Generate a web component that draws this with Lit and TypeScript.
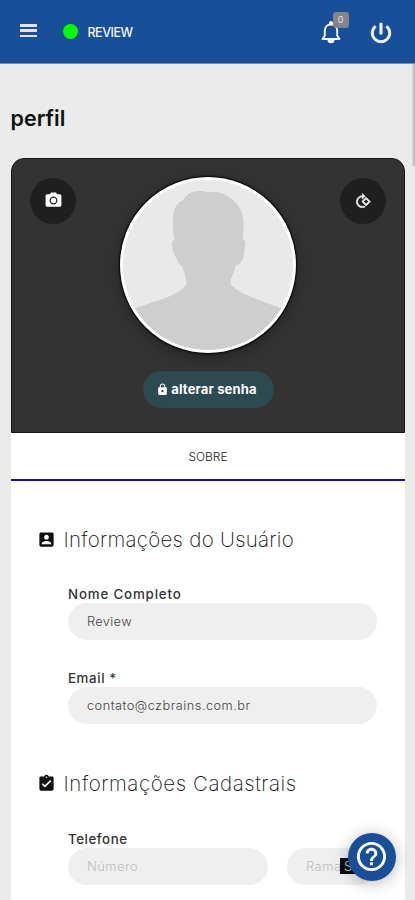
import { LitElement, html, css, svg } from "lit";
import { customElement } from "lit/decorators.js";

const ICONS: Record<string, string> = {
  power: "M13 3h-2v10h2V3zm4.83 2.17l-1.42 1.42C17.99 7.86 19 9.81 19 12c0 3.87-3.13 7-7 7s-7-3.13-7-7c0-2.19 1.01-4.14 2.58-5.42L6.17 5.17C4.23 6.82 3 9.26 3 12c0 4.97 4.03 9 9 9s9-4.03 9-9c0-2.74-1.23-5.18-3.17-6.83z",
  camera: "M9 2L7.17 4H4c-1.1 0-2 .9-2 2v12c0 1.1.9 2 2 2h16c1.1 0 2-.9 2-2V6c0-1.1-.9-2-2-2h-3.17L15 2H9zm3 15c-2.76 0-5-2.24-5-5s2.24-5 5-5 5 2.24 5 5-2.24 5-5 5zm0-1.6a3.4 3.4 0 1 0 0-6.8 3.4 3.4 0 0 0 0 6.8z",
  rotate: "M16.66 6.41L23.14 12.9l-6.49 6.48-6.49-6.48 6.5-6.49zM20.31 12.9l-3.66-3.66L13 12.9l3.66 3.66 3.65-3.66zM4.64 6.64C6.39 4.88 8.7 4 11 4V.76L15.24 5 11 9.24V6c-1.79 0-3.58.68-4.95 2.05-2.73 2.73-2.73 7.17 0 9.9C7.42 19.32 9.21 20 11 20c.97 0 1.94-.21 2.84-.61l1.49 1.49C13.98 21.62 12.49 22 11 22c-2.3 0-4.61-.88-6.36-2.64-3.52-3.51-3.52-9.21 0-12.72z",
  lock: "M18 8h-1V6c0-2.76-2.24-5-5-5S7 3.24 7 6v2H6c-1.1 0-2 .9-2 2v10c0 1.1.9 2 2 2h12c1.1 0 2-.9 2-2V10c0-1.1-.9-2-2-2zm-6 9c-1.1 0-2-.9-2-2s.9-2 2-2 2 .9 2 2-.9 2-2 2zm3.1-9H8.9V6c0-1.71 1.39-3.1 3.1-3.1s3.1 1.39 3.1 3.1v2z",
  account: "M3 5v14c0 1.1.89 2 2 2h14c1.1 0 2-.9 2-2V5c0-1.1-.9-2-2-2H5c-1.11 0-2 .9-2 2zm12 4c0 1.66-1.34 3-3 3s-3-1.34-3-3 1.34-3 3-3 3 1.34 3 3zm-9 8c0-2 4-3.1 6-3.1s6 1.1 6 3.1v1H6v-1z",
  clipboard: "M19 3h-4.18C14.4 1.84 13.3 1 12 1c-1.3 0-2.4.84-2.82 2H5c-1.1 0-2 .9-2 2v14c0 1.1.9 2 2 2h14c1.1 0 2-.9 2-2V5c0-1.1-.9-2-2-2zm-7 0c.55 0 1 .45 1 1s-.45 1-1 1-1-.45-1-1 .45-1 1-1zm-2 14l-4-4 1.41-1.41L10 14.17l6.59-6.59L18 9l-8 8z",
  help: "M11 18h2v-2h-2v2zm1-16C6.48 2 2 6.48 2 12s4.48 10 10 10 10-4.48 10-10S17.52 2 12 2zm0 18c-4.41 0-8-3.59-8-8s3.59-8 8-8 8 3.59 8 8-3.59 8-8 8zm0-14c-2.21 0-4 1.79-4 4h2c0-1.1.9-2 2-2s2 .9 2 2c0 2-3 1.75-3 5h2c0-2.25 3-2.5 3-5 0-2.21-1.79-4-4-4z",
};

const icon = (name: string, cls: string) =>
  html`<svg class="icon ${cls}" viewBox="0 0 24 24">${svg`<path d=${ICONS[name]} />`}</svg>`;

@customElement("app-root")
export class AppRoot extends LitElement {
  static styles = css`
    * { box-sizing: border-box; }
    :host {
      display: block; position: relative; height: 900px; overflow: hidden;
      background: #ebebeb; color: #111;
      font-family: Inter, "Noto Sans", sans-serif;
    }
    .icon { display: block; fill: currentColor; flex: none; }
    .bar {
      height: 64px; background: #184f98; color: #f5f3ff; display: flex; align-items: center;
      padding: 0 20px; border-bottom: 1px solid #6f8fbd;
    }
    .menu { width: 17px; height: 13px; display: flex; flex-direction: column; justify-content: space-between; margin-top: -2px; }
    .menu i { height: 2.5px; background: #e6e0fa; }
    .dot { width: 15px; height: 15px; border-radius: 50%; background: #0f0; margin-left: 26px; }
    .user { margin-left: 9.5px; font-size: 12.5px; font-weight: 500; letter-spacing: -0.5px; padding-top: 2px; }
    .bell { position: relative; margin-left: auto; margin-right: 27px; }
    .i-bell { width: 20px; height: 24px; }
    .i-power { width: 26px; height: 26px; stroke: currentColor; stroke-width: .8; margin-right: 1.5px; margin-top: 2px; }
    .count {
      position: absolute; left: 12px; top: -8px; width: 16px; height: 16px; border-radius: 3px;
      background: #858585; color: #e8e8e8; font-size: 9px; line-height: 16px; text-align: center;
    }
    .thumb { position: absolute; right: 0; top: 64px; width: 3.5px; height: 102px; background: #c4c4c4; border-left: 1px solid #d6d6d6; }
    h1 { margin: 40px 0 0 10.5px; height: 53.5px; font-size: 21.5px; line-height: 28px; font-weight: 600; }
    .card { margin: 0 10px 0 11px; height: 760px; background: #fff; border-radius: 13px 13px 0 0; }
    .cover {
      height: 275px; background: #333; border: 1px solid #151515; border-radius: 13px 13px 0 0;
      display: grid; grid-template-columns: 46px 1fr 46px; padding: 18px 18px 0; align-items: start;
      grid-template-rows: 194px 37px;
    }
    .round { width: 46px; height: 46px; border-radius: 50%; background: #1f1f1f; color: #fff; display: grid; place-items: center; margin-top: 1px; }
    .i-camera { width: 19px; height: 19px; }
    .i-rotate { width: 16px; height: 16px; stroke: currentColor; stroke-width: .9; color: #eee; }
    .avatar {
      width: 176px; height: 176px; border-radius: 50%; border: 3.5px solid #fff; background: #e9e9e9;
      overflow: hidden; justify-self: center; box-shadow: 0 0 2px 1px #000, 0 5px 15px rgba(0, 0, 0, .3);
    }
    .avatar svg { display: block; width: 100%; height: 100%; }
    .password {
      grid-column: 2; justify-self: center; width: 131px; height: 37px; border-radius: 19px; background: #2d4a50;
      color: #fff; display: flex; align-items: center; justify-content: center; gap: 2px;
      font-size: 13px; font-weight: 700; letter-spacing: 0.15px; white-space: nowrap; padding-right: 3px;
    }
    .i-lock { width: 13px; height: 13px; }
    .tab {
      height: 48px; border-bottom: 2px solid #16168c; display: flex; align-items: center; justify-content: center;
      font-size: 12px; font-weight: 300; color: #222; letter-spacing: -0.05px; padding-top: 2px;
    }
    .title { display: flex; align-items: center; height: 28px; margin: 44.5px 0 0 26px; }
    .title h2 { margin: 0 0 0 7.5px; font-size: 20.5px; font-weight: 200; white-space: nowrap; letter-spacing: .27px; }
    .title.second { margin-top: 46px; }
    .title.second h2 { letter-spacing: .58px; }
    .i-section { width: 19px; height: 19px; }
    .fields { padding: 0 28px 0 57px; }
    .field { display: flex; flex-direction: column; }
    .row { display: flex; gap: 19px; }
    label { display: block; font-size: 13.3px; line-height: 18px; font-weight: 500; color: #333; white-space: nowrap; letter-spacing: .55px; }
    .first { margin-top: 31.5px; }
    .phone { margin-top: 32px; }
    .next { margin-top: 29px; }
    .input {
      height: 37px; flex: 1; border-radius: 19px; background: #efefef; color: #444; padding: 0 0 0 19px;
      font-size: 12.8px; line-height: 37px; white-space: nowrap; overflow: hidden; font-weight: 300; letter-spacing: .35px;
    }
    .field .input { flex: none; }
    .field .w-email { letter-spacing: .47px; }
    .row .input { color: #bdbdbd; letter-spacing: .55px; }
    .row .ext { flex: 0 0 90px; }
    .w-name { letter-spacing: .84px; }
    .w-mail { letter-spacing: .6px; }
    .tag { position: absolute; left: 340px; top: 858px; width: 26px; height: 16px; background: #0c0c12; color: #bbb; font-size: 13px; line-height: 16px; padding-left: 4px; }
    .fab {
      position: absolute; left: 347.5px; top: 832.5px; width: 48px; height: 48px; border-radius: 50%;
      background: #184f98; color: #fff; display: grid; place-items: center; box-shadow: 0 2px 16px rgba(0, 0, 0, .28);
    }
    .i-help { width: 35px; height: 35px; }
  `;

  render() {
    return html`
      <header class="bar">
        <div class="menu"><i></i><i></i><i></i></div>
        <span class="dot"></span>
        <span class="user">REVIEW</span>
        <div class="bell">
          <svg class="icon i-bell" viewBox="0 0 20 24">
            <path d="M1.5 19 L3.8 15.7 V11 C3.8 7.4 6 4.6 10 4.6 C14 4.6 16.2 7.4 16.2 11 V15.7 L18.5 19 Z" fill="none" stroke="currentColor" stroke-width="2" stroke-linejoin="round" />
            <path d="M8 4.5 V3 a2 2 0 0 1 4 0 V4.5Z M6.5 20 h7 a3.5 3.2 0 0 1-7 0Z" />
          </svg>
          <span class="count">0</span>
        </div>
        ${icon("power", "i-power")}
      </header>
      <div class="thumb"></div>
      <h1>perfil</h1>
      <main class="card">
        <section class="cover">
          <div class="round">${icon("camera", "i-camera")}</div>
          <div class="avatar">
            <svg viewBox="0 0 169 169">
              <path fill="#cecece" d="M-3 132 L13 127 L43 117 Q61 110 63 103 Q63 95 58 85 Q55 84 54 79 Q49 73 49 66 Q48 60 51 60 Q49 47 50 36 Q51 23 60 20 Q65 10 79 11 L84 12 Q98 10 108 19 Q120 28 120 45 L119 59 Q123 60 121 66 Q121 79 116 83 L112 85 Q111 91 107 99 L107 104 Q116 113 132 118 L161 129 L175 133 V175 H-3Z" />
            </svg>
          </div>
          <div class="round">${icon("rotate", "i-rotate")}</div>
          <div class="password">${icon("lock", "i-lock")}<span>alterar senha</span></div>
        </section>
        <nav class="tab">SOBRE</nav>
        <div class="title">${icon("account", "i-section")}<h2>Informações do Usuário</h2></div>
        <div class="fields">
          <div class="field first"><label class="w-name">Nome Completo</label><div class="input">Review</div></div>
          <div class="field next"><label class="w-mail">Email *</label><div class="input w-email">contato@czbrains.com.br</div></div>
        </div>
        <div class="title second">${icon("clipboard", "i-section")}<h2>Informações Cadastrais</h2></div>
        <div class="fields phone">
          <label>Telefone</label>
          <div class="row"><div class="input">Número</div><div class="input ext">Ramal</div></div>
        </div>
      </main>
      <div class="tag">S</div>
      <div class="fab">${icon("help", "i-help")}</div>
    `;
  }
}
